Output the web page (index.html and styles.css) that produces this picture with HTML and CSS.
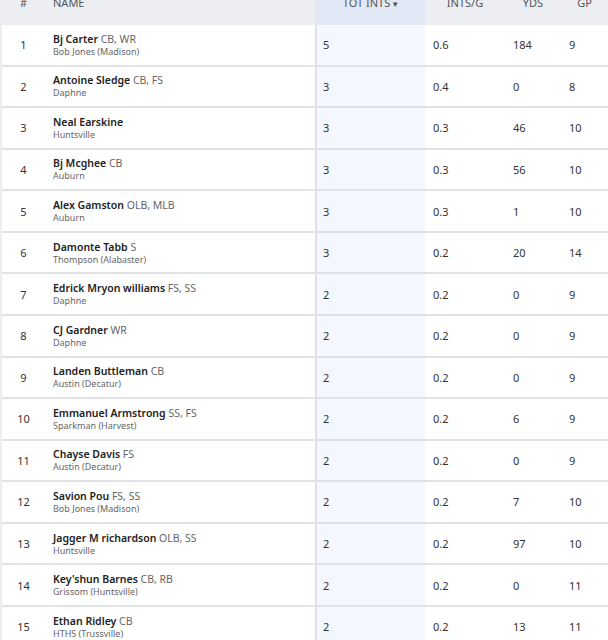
FILE: index.html
```html
<!DOCTYPE html>
<html>
<head>
<meta charset="utf-8">
<link rel="stylesheet" href="styles.css">
</head>
<body>
<div class="wrap">
<table class="stats">
<thead>
<tr>
<th class="c-rank">#</th>
<th class="c-name">NAME</th>
<th class="c-tot sorted">TOT INTS<span class="arrow">▼</span></th>
<th class="c-ipg">INTS/G</th>
<th class="c-yds">YDS</th>
<th class="c-gp">GP</th>
</tr>
</thead>
<tbody>
<tr><td class="c-rank">1</td><td class="c-name"><div class="pn">Bj Carter <span class="pos">CB, WR</span></div><div class="sch">Bob Jones (Madison)</div></td><td class="c-tot">5</td><td>0.6</td><td>184</td><td>9</td></tr>
<tr><td class="c-rank">2</td><td class="c-name"><div class="pn">Antoine Sledge <span class="pos">CB, FS</span></div><div class="sch">Daphne</div></td><td class="c-tot">3</td><td>0.4</td><td>0</td><td>8</td></tr>
<tr><td class="c-rank">3</td><td class="c-name"><div class="pn">Neal Earskine</div><div class="sch">Huntsville</div></td><td class="c-tot">3</td><td>0.3</td><td>46</td><td>10</td></tr>
<tr><td class="c-rank">4</td><td class="c-name"><div class="pn">Bj Mcghee <span class="pos">CB</span></div><div class="sch">Auburn</div></td><td class="c-tot">3</td><td>0.3</td><td>56</td><td>10</td></tr>
<tr><td class="c-rank">5</td><td class="c-name"><div class="pn">Alex Gamston <span class="pos">OLB, MLB</span></div><div class="sch">Auburn</div></td><td class="c-tot">3</td><td>0.3</td><td>1</td><td>10</td></tr>
<tr><td class="c-rank">6</td><td class="c-name"><div class="pn">Damonte Tabb <span class="pos">S</span></div><div class="sch">Thompson (Alabaster)</div></td><td class="c-tot">3</td><td>0.2</td><td>20</td><td>14</td></tr>
<tr><td class="c-rank">7</td><td class="c-name"><div class="pn">Edrick Mryon williams <span class="pos">FS, SS</span></div><div class="sch">Daphne</div></td><td class="c-tot">2</td><td>0.2</td><td>0</td><td>9</td></tr>
<tr><td class="c-rank">8</td><td class="c-name"><div class="pn">CJ Gardner <span class="pos">WR</span></div><div class="sch">Daphne</div></td><td class="c-tot">2</td><td>0.2</td><td>0</td><td>9</td></tr>
<tr><td class="c-rank">9</td><td class="c-name"><div class="pn">Landen Buttleman <span class="pos">CB</span></div><div class="sch">Austin (Decatur)</div></td><td class="c-tot">2</td><td>0.2</td><td>0</td><td>9</td></tr>
<tr><td class="c-rank">10</td><td class="c-name"><div class="pn">Emmanuel Armstrong <span class="pos">SS, FS</span></div><div class="sch">Sparkman (Harvest)</div></td><td class="c-tot">2</td><td>0.2</td><td>6</td><td>9</td></tr>
<tr><td class="c-rank">11</td><td class="c-name"><div class="pn">Chayse Davis <span class="pos">FS</span></div><div class="sch">Austin (Decatur)</div></td><td class="c-tot">2</td><td>0.2</td><td>0</td><td>9</td></tr>
<tr><td class="c-rank">12</td><td class="c-name"><div class="pn">Savion Pou <span class="pos">FS, SS</span></div><div class="sch">Bob Jones (Madison)</div></td><td class="c-tot">2</td><td>0.2</td><td>7</td><td>10</td></tr>
<tr><td class="c-rank">13</td><td class="c-name"><div class="pn">Jagger M richardson <span class="pos">OLB, SS</span></div><div class="sch">Huntsville</div></td><td class="c-tot">2</td><td>0.2</td><td>97</td><td>10</td></tr>
<tr><td class="c-rank">14</td><td class="c-name"><div class="pn">Key'shun Barnes <span class="pos">CB, RB</span></div><div class="sch">Grissom (Huntsville)</div></td><td class="c-tot">2</td><td>0.2</td><td>0</td><td>11</td></tr>
<tr><td class="c-rank">15</td><td class="c-name"><div class="pn">Ethan Ridley <span class="pos">CB</span></div><div class="sch">HTHS (Trussville)</div></td><td class="c-tot">2</td><td>0.2</td><td>13</td><td>11</td></tr>
</tbody>
</table>
</div>
</body>
</html>
```
FILE: styles.css
```css
html, body {
  margin: 0;
  padding: 0;
}
body {
  background: #eceef2;
  font-family: "Noto Sans", "Open Sans", sans-serif;
  color: #333;
  overflow: hidden;
}
.wrap {
  margin-top: -20px;
  padding-left: 2px;
}
.stats {
  width: 606px;
  border-collapse: collapse;
  table-layout: fixed;
}
.stats th {
  height: 45px;
  padding: 0;
  font-size: 11px;
  font-weight: 400;
  color: #555;
  text-align: center;
  background: #eceef2;
  vertical-align: middle;
}
.stats th.c-name {
  text-align: left;
  padding-left: 8px;
}
.stats th.sorted {
  background: #e2e8f5;
}
.arrow {
  font-size: 8px;
  margin-left: 1px;
}
.stats td {
  height: 38.57px;
  padding: 0 0 0 8px;
  background: #fff;
  border-bottom: 2px solid #e1e2e5;
  font-size: 11px;
  color: #333;
  vertical-align: middle;
}
.stats td.c-rank {
  padding: 0;
  text-align: center;
  font-size: 11px;
}
.stats td.c-tot {
  background: #f4f7fd;
  padding-left: 6px;
}
.c-rank { width: 43px; }
.c-name { width: 262px; }
.c-tot { width: 108px; border-left: 2px solid #e0e1e4; }
.c-ipg { width: 80px; }
.c-yds { width: 56px; }
.c-gp { width: 47px; }
th.c-tot { border-left: 2px solid #e3e6ee; }
.stats td.c-name {
  padding-top: 1px;
}
.pn {
  font-size: 10.5px;
  font-weight: 600;
  color: #222;
  line-height: 13px;
}
.pos {
  font-weight: 400;
  color: #666;
}
.sch {
  font-size: 9px;
  color: #666;
  line-height: 12px;
}
```
